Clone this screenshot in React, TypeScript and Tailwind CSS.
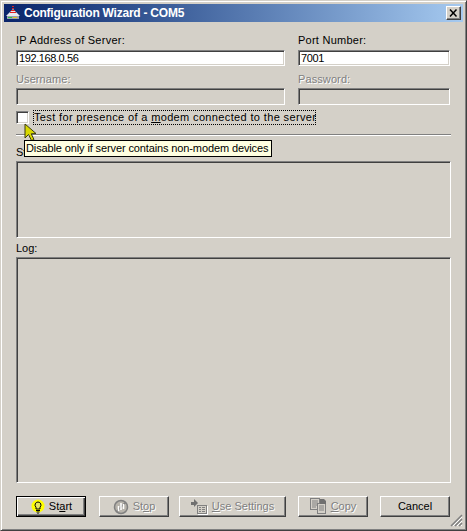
const sunken = 'border border-t-[#808080] border-l-[#808080] border-r-white border-b-white shadow-[inset_1px_1px_0_#404040,inset_-1px_-1px_0_#d4d0c8]';
const raised = 'border border-t-white border-l-white border-r-[#404040] border-b-[#404040] shadow-[inset_-1px_-1px_0_#808080]';
const disabled = 'text-[#808080] [text-shadow:1px_1px_0_#fff]';

function AppIcon() {
  return (
    <svg width="16" height="16" viewBox="0 0 16 16" className="shrink-0">
      <path d="M8 4 L15 11 H1 Z" fill="#e8e8f0" />
      <path d="M7 1h2v1H7zM7 3h2v1H7zM6 5h4v1H6zM5 7h6v1H5z" fill="#e02020" />
      <rect x="2" y="11" width="12" height="3" fill="#9aa0b0" />
      <rect x="3" y="12" width="4" height="1" fill="#30c040" />
      <rect x="8" y="12" width="4" height="1" fill="#e0c020" />
    </svg>
  );
}

function BulbIcon() {
  return (
    <svg width="16" height="16" viewBox="0 0 16 16" className="shrink-0">
      <circle cx="8" cy="7" r="6.500" fill="#ffff00" />
      <path d="M8 3a3 3 0 0 0-2 5.200V10h4V8.200A3 3 0 0 0 8 3z" fill="#e8e860" stroke="#000" />
      <path d="M6 11.500h4M6.500 13h3M7.500 14.500h1" stroke="#000" />
    </svg>
  );
}

function StopIcon() {
  return (
    <svg width="16" height="16" viewBox="0 0 16 16" className="shrink-0">
      <circle cx="8" cy="8" r="6.500" fill="#b8b4ac" stroke="#808080" strokeWidth="1.500" />
      <path d="M3.500 12.500 L12.500 3.500" stroke="#808080" strokeWidth="1.500" />
      <path d="M5.500 12V7M8 11V4M10.500 10V5" stroke="#fff" strokeWidth="1.500" />
    </svg>
  );
}

function SettingsIcon() {
  return (
    <svg width="17" height="16" viewBox="0 0 17 16" className="shrink-0">
      <path d="M0 3h3V0l4 4-4 4V6H0z" fill="#707070" />
      <rect x="6.500" y="6.500" width="9" height="8" fill="#d4d0c8" stroke="#808080" />
      <path d="M8 8.500h2M11 8.500h3M8 10.500h2M11 10.500h3M8 12.500h2M11 12.500h3" stroke="#808080" />
      <path d="M7 15.500h9.500M16.500 7v9" stroke="#fff" />
    </svg>
  );
}

function CopyIcon() {
  return (
    <svg width="17" height="17" viewBox="0 0 17 17" className="shrink-0">
      <rect x="0.500" y="0.500" width="9" height="11" fill="#d4d0c8" stroke="#808080" />
      <path d="M2 3h6M2 5h6M2 7h6M2 9h4" stroke="#808080" />
      <rect x="7.500" y="5.500" width="8" height="10" fill="#d4d0c8" stroke="#808080" />
      <path d="M9 8h5M9 10h5M9 12h5" stroke="#808080" />
      <path d="M10 1h4l2 2v3h-6z" fill="#707070" />
    </svg>
  );
}

function Cursor() {
  return (
    <svg width="14" height="20" viewBox="0 0 14 20" className="absolute left-[23px] top-[122px]">
      <path d="M1 1 L1 15 L4.500 11.500 L7.500 17.500 L10 16.500 L7.200 10.800 L12 10.500 Z" fill="#d8d800" stroke="#3a3a10" strokeWidth="1" />
    </svg>
  );
}

function Btn({ icon, children, w, isDisabled, isDefault, gap = 'gap-[4px]' }: { icon?: React.ReactNode; children: React.ReactNode; w: string; isDisabled?: boolean; isDefault?: boolean; gap?: string }) {
  const frame = isDefault
    ? 'border border-black shadow-[inset_1px_1px_0_#fff,inset_-1px_-1px_0_#404040,inset_-2px_-2px_0_#808080]'
    : raised;
  return (
    <button className={`${w} h-[21px] ${frame} flex items-center justify-center ${gap} ${isDisabled ? disabled : 'text-black'}`}>
      {icon}
      <span>{children}</span>
    </button>
  );
}

export default function App() {
  return (
    <div className="relative w-[467px] h-[531px] bg-[#d4d0c8] text-[11px] leading-[13px] text-black font-['Liberation_Sans',sans-serif] overflow-hidden border border-t-[#d4d0c8] border-l-[#d4d0c8] border-r-[#404040] border-b-[#404040] p-[3px] shadow-[inset_1px_1px_0_#fff,inset_-1px_-1px_0_#808080]">
      <div className="h-[18px] pl-[1px] pr-[2px] flex items-center gap-[3px] bg-gradient-to-r from-[#0a246a] to-[#a6caf0] text-white font-bold text-[12px]">
        <AppIcon />
        <span className="flex-1 tracking-[-0.24px]">Configuration Wizard - COM5</span>
        <div className={`w-[15px] h-[14px] bg-[#d4d0c8] ${raised} flex items-center justify-center`}>
          <svg width="9" height="8" viewBox="0 0 9 8">
            <path d="M1 0.500 L7.500 7.500 M7.500 0.500 L1 7.500" stroke="#000" strokeWidth="1.500" />
          </svg>
        </div>
      </div>

      <div className="pl-3 pr-[12px] pt-[11px]">
        <div className="grid grid-cols-[269px_152px] gap-x-[13px]">
          <label className="h-[17px] pt-[1px] tracking-[0.25px]">IP Address of Server:</label>
          <label className="h-[17px] pt-[1px] tracking-[0.25px]">Port Number:</label>
          <div className={`h-[16px] bg-white ${sunken} px-[2px] flex items-center tracking-[-0.4px]`}>192.168.0.56</div>
          <div className={`h-[16px] bg-white ${sunken} px-[2px] flex items-center tracking-[-0.4px]`}>7001</div>
          <label className={`h-[16px] mt-[6px] pt-[1px] tracking-[0.1px] ${disabled}`}>Username:</label>
          <label className={`h-[16px] mt-[6px] pt-[1px] tracking-[0.1px] ${disabled}`}>Password:</label>
          <div className={`h-[17px] ${sunken}`} />
          <div className={`h-[17px] ${sunken}`} />
        </div>

        <div className="flex items-center mt-[5px] h-[15px]">
          <div className={`w-[13px] h-[13px] bg-white ${sunken}`} />
          <span className="ml-[4px] h-[15px] w-[283px] flex items-center border border-dotted border-black whitespace-nowrap tracking-[0.36px]">
            <span>Test for presence of a <span className="underline">m</span>odem connected to the server</span>
          </span>
        </div>

        <div className="mt-[9px] h-[2px] border-t border-t-[#808080] border-b border-b-white" />

        <label className="block mt-[9px] h-[16px] pt-[1px]">Status:</label>
        <div className={`h-[77px] ${sunken}`} />

        <label className="block mt-[3px] h-[16px] pt-[1px]">Log:</label>
        <div className={`h-[226px] ${sunken}`} />

        <div className="flex mt-[13px]">
          <Btn w="w-[70px]" isDefault gap="gap-[3px]" icon={<BulbIcon />}>
            St<span className="underline">a</span>rt
          </Btn>
          <div className="ml-[13px]">
            <Btn w="w-[70px]" isDisabled icon={<StopIcon />}>
              St<span className="underline">o</span>p
            </Btn>
          </div>
          <div className="ml-[10px]">
            <Btn w="w-[107px]" isDisabled icon={<SettingsIcon />}>
              <span className="underline">U</span>se Settings
            </Btn>
          </div>
          <div className="ml-[12px]">
            <Btn w="w-[70px]" isDisabled icon={<CopyIcon />}>
              <span className="underline">C</span>opy
            </Btn>
          </div>
          <div className="ml-[12px]">
            <Btn w="w-[70px]">Cancel</Btn>
          </div>
        </div>
      </div>

      <Cursor />
      <div className="absolute left-[23px] top-[139px] h-[17px] w-[248px] bg-[#ffffe1] border border-black pl-[1px] flex items-center whitespace-nowrap tracking-[-0.12px]">
        Disable only if server contains non-modem devices
      </div>
      <svg width="13" height="13" viewBox="0 0 13 13" className="absolute right-[3px] bottom-[3px]">
        <path d="M12 1 L1 12 M12 5 L5 12 M12 9 L9 12" stroke="#808080" strokeWidth="1.500" />
        <path d="M12 3 L3 12 M12 7 L7 12 M12 11 L11 12" stroke="#fff" />
      </svg>
    </div>
  );
}
